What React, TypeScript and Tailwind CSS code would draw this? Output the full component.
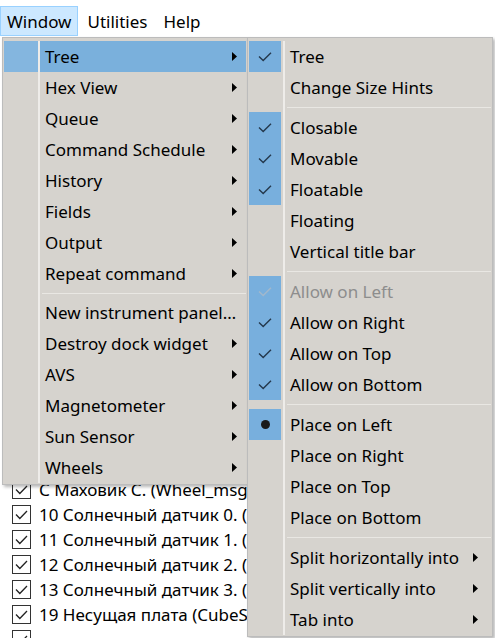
import React from "react";

type Row =
  | { sep: true }
  | {
      sep?: false;
      label: string;
      arrow?: boolean;
      hl?: boolean;
      mark?: "check" | "radio" | "dcheck";
      blue?: boolean;
      disabled?: boolean;
    };

const menu1: Row[] = [
  { label: "Tree", arrow: true, hl: true },
  { label: "Hex View", arrow: true },
  { label: "Queue", arrow: true },
  { label: "Command Schedule", arrow: true },
  { label: "History", arrow: true },
  { label: "Fields", arrow: true },
  { label: "Output", arrow: true },
  { label: "Repeat command", arrow: true },
  { sep: true },
  { label: "New instrument panel…" },
  { label: "Destroy dock widget", arrow: true },
  { label: "AVS", arrow: true },
  { label: "Magnetometer", arrow: true },
  { label: "Sun Sensor", arrow: true },
  { label: "Wheels", arrow: true },
];

const menu2: Row[] = [
  { label: "Tree", mark: "check", blue: true },
  { label: "Change Size Hints" },
  { sep: true },
  { label: "Closable", mark: "check", blue: true },
  { label: "Movable", mark: "check", blue: true },
  { label: "Floatable", mark: "check", blue: true },
  { label: "Floating" },
  { label: "Vertical title bar" },
  { sep: true },
  { label: "Allow on Left", mark: "dcheck", blue: true, disabled: true },
  { label: "Allow on Right", mark: "check", blue: true },
  { label: "Allow on Top", mark: "check", blue: true },
  { label: "Allow on Bottom", mark: "check", blue: true },
  { sep: true },
  { label: "Place on Left", mark: "radio", blue: true },
  { label: "Place on Right" },
  { label: "Place on Top" },
  { label: "Place on Bottom" },
  { sep: true },
  { label: "Split horizontally into", arrow: true },
  { label: "Split vertically into", arrow: true },
  { label: "Tab into", arrow: true },
];

const listRows = [
  "С Маховик С. (Wheel_msg",
  "10 Солнечный датчик 0. (",
  "11 Солнечный датчик 1. (",
  "12 Солнечный датчик 2. (",
  "13 Солнечный датчик 3. (",
  "19 Несущая плата (CubeS",
  "",
];

function Arrow() {
  return (
    <svg width="5" height="9" viewBox="0 0 5 9" className="shrink-0">
      <polygon points="0,0 5,4.5 0,9" fill="#000" />
    </svg>
  );
}

function Check({ color }: { color: string }) {
  return (
    <svg width="14" height="10" viewBox="0 0 14 10">
      <path d="M1 4.5 L5.2 8.6 L13 0.8" fill="none" stroke={color} strokeWidth="1.4" />
    </svg>
  );
}

function Menu({ rows, sepH, pr }: { rows: Row[]; sepH: string; pr: string }) {
  return (
    <div className="flex flex-col border border-[#bcbcbc] bg-[#d6d3ce] px-[1px] pt-[3px] pb-[1px] shadow-[2px_2px_3px_rgba(0,0,0,0.28)]">
      {rows.map((r, i) => {
        if (r.sep) {
          return (
            <div key={i} className={`flex ${sepH}`}>
              <div className="w-[34px] shrink-0" />
              <div className="w-[2px] shrink-0 bg-[#eeece9]" />
              <div className="flex flex-1 items-center pl-[2px]">
                <div className="h-[1px] w-full bg-[#e9e7e3]" />
              </div>
            </div>
          );
        }
        return (
          <div key={i} className={`flex h-[31px] ${r.hl ? "bg-[#7ab0dc]" : ""}`}>
            <div className={`flex w-[34px] shrink-0 ${r.hl ? "bg-[#84b6df]" : ""}`}>
              {r.blue && (
                <div className="flex w-[32px] items-center justify-center bg-[#78afdd]">
                  {r.mark === "check" && <Check color="#24384c" />}
                  {r.mark === "dcheck" && <Check color="#a2b8cc" />}
                  {r.mark === "radio" && <div className="h-[9px] w-[9px] rounded-full bg-[#1a1a1a]" />}
                </div>
              )}
            </div>
            <div className="w-[2px] shrink-0 bg-[#eeece9]" />
            <div className={`flex flex-1 items-center pl-[5px] ${pr}`}>
              <span className={`flex-1 whitespace-nowrap ${r.disabled ? "text-[#8d8d8d]" : "text-black"}`}>{r.label}</span>
              {r.arrow && <Arrow />}
            </div>
          </div>
        );
      })}
    </div>
  );
}

export default function App() {
  return (
    <div className="relative h-[638px] w-[495px] overflow-hidden bg-white font-['Noto_Sans',sans-serif] text-[17px] leading-none text-black">
      <div className="flex h-[36px] items-end">
        <div className="flex h-[30px] items-center border border-[#99d1ff] bg-[#cce8ff] pl-[6px] pr-[6px]">Window</div>
        <div className="flex h-[30px] items-center pl-[9px] pr-[8px]">Utilities</div>
        <div className="flex h-[30px] items-center px-[8px]">Help</div>
      </div>

      <div className="flex flex-col pt-[441px]">
        {listRows.map((t, i) => (
          <div key={i} className="flex h-[25px] items-center gap-[8px] pl-[12px]">
            <div className="flex h-[19px] w-[19px] shrink-0 items-center justify-center border border-[#333]">
              <svg width="13" height="10" viewBox="0 0 13 10">
                <path d="M1 4.5 L4.8 8.5 L12 1" fill="none" stroke="#222" strokeWidth="1.3" />
              </svg>
            </div>
            {t && <span className="whitespace-nowrap">{t}</span>}
          </div>
        ))}
      </div>

      <div className="absolute left-[2px] top-[37px] w-[246px]">
        <Menu rows={menu1} sepH="h-[8px]" pr="pr-[9px]" />
      </div>
      <div className="absolute left-[247px] top-[37px] w-[246px]">
        <Menu rows={menu2} sepH="h-[9px]" pr="pr-[13px]" />
      </div>
    </div>
  );
}
